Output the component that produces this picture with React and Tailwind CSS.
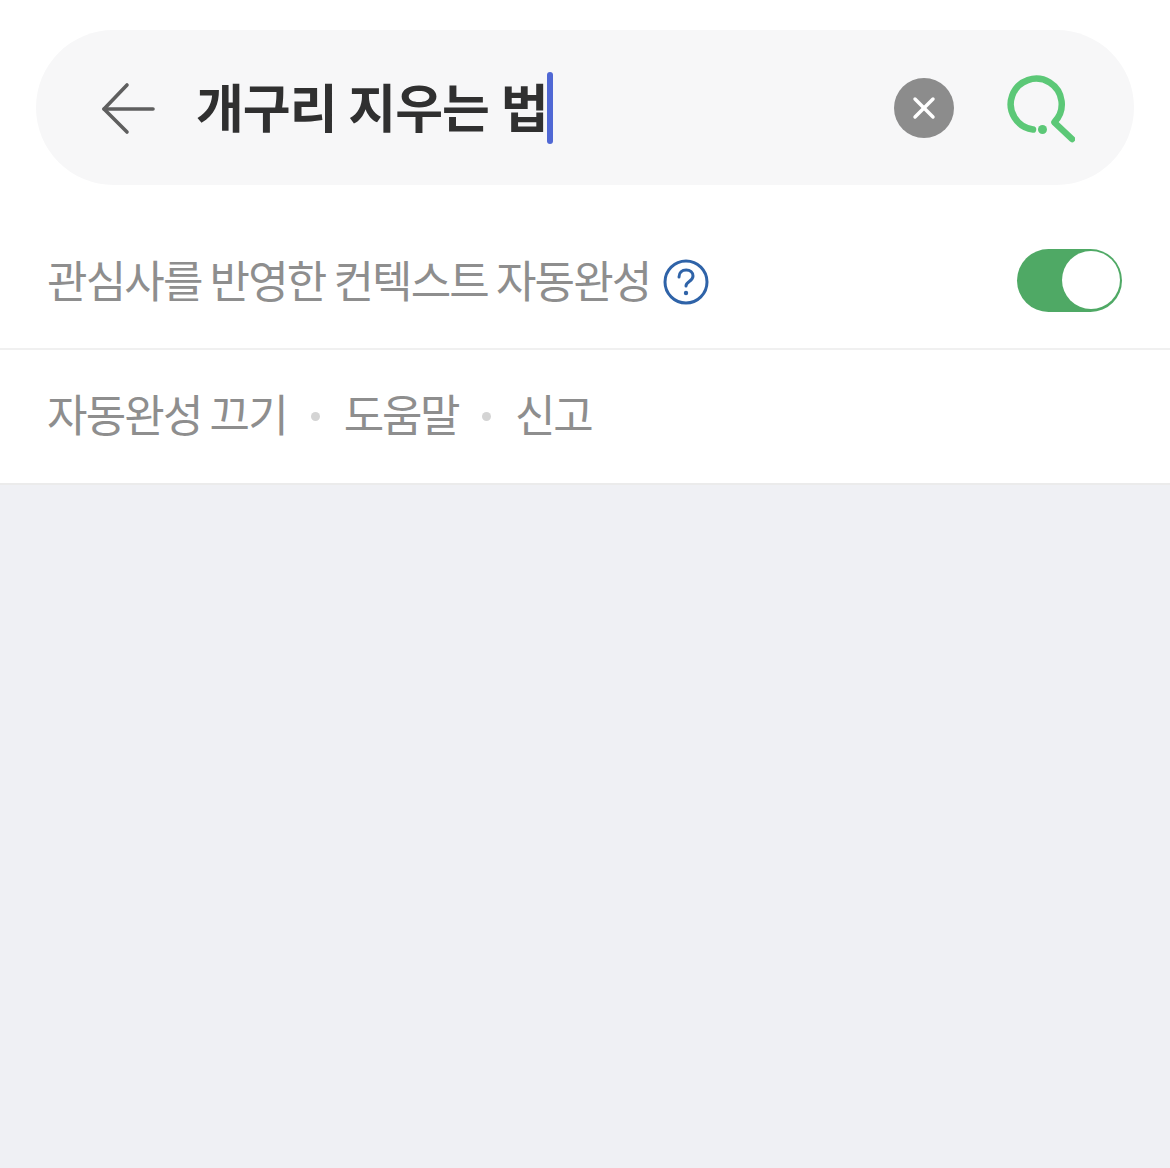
import { X } from 'lucide-react';

const KR = { fontFamily: '"Noto Sans CJK KR", "Noto Sans", sans-serif' };

function BackIcon() {
  return (
    <svg width="56" height="54" viewBox="0 0 56 54" fill="none" stroke="#5f5f5f" strokeWidth="3.6" strokeLinecap="round" strokeLinejoin="round">
      <path d="M52 28H3" />
      <path d="M26 4L3 28l23 23" />
    </svg>
  );
}

function SearchIcon() {
  return (
    <svg width="70" height="70" viewBox="0 0 70 70" fill="none" stroke="#5cc877" strokeWidth="6.5" strokeLinecap="round">
      <path d="M28 56.5A25.5 25.5 0 1 1 49.5 49" />
      <path d="M50 50L67 66" />
      <circle cx="37.5" cy="56.5" r="4.5" fill="#5cc877" stroke="none" />
    </svg>
  );
}

function HelpIcon() {
  return (
    <svg width="46" height="46" viewBox="0 0 46 46" fill="none" stroke="#2f63a8" strokeWidth="3" strokeLinecap="round">
      <circle cx="23" cy="23" r="21" />
      <path d="M16 18c0-4.4 3-7 7.2-7 4 0 6.8 2.5 6.8 6 0 5.5-7 5.5-7 10" />
      <circle cx="23" cy="34" r="2.2" fill="#2f63a8" stroke="none" />
    </svg>
  );
}

function Dot() {
  return <span className="w-[9px] h-[9px] rounded-full bg-[#d4d4d4] mt-1" />;
}

function App() {
  return (
    <div className="min-h-[1168px] bg-[#eff0f4] flex flex-col" style={KR}>
      {/* Search box */}
      <div className="bg-white pt-[30px] px-9">
        <div className="h-[155px] rounded-[78px] bg-[#f7f7f8] flex items-center pl-[65px] pr-[59px]">
          <BackIcon />
          <div className="ml-[39px] flex items-center">
            <span className="text-[52px] leading-none font-bold tracking-[-1px] [word-spacing:1px] text-[#303030] whitespace-nowrap -mt-[3px]">
              개구리 지우는 법
            </span>
            <span className="w-[6px] h-[72px] rounded-full bg-[#5068d4] -ml-[1px]" />
          </div>
          <button className="ml-auto w-[60px] h-[60px] rounded-full bg-[#8c8c8c] flex items-center justify-center">
            <X size={36} color="white" strokeWidth={2.3} />
          </button>
          <div className="ml-[51px]">
            <SearchIcon />
          </div>
        </div>
      </div>

      {/* Context autocomplete row */}
      <div className="h-[165px] bg-white border-b-[2px] border-[#f0f0f0] flex items-center pl-[47px] pr-12 pt-[27px]">
        <span className="text-[44px] leading-none tracking-[-1.85px] text-[#8e8e8e] whitespace-nowrap -mt-[2px]">
          관심사를 반영한 컨텍스트 자동완성
        </span>
        <span className="ml-[13px] mt-1 flex">
          <HelpIcon />
        </span>
        <div className="ml-auto w-[105px] h-[63px] rounded-full bg-[#4fa965] flex items-center justify-end pr-[2px]">
          <span className="w-[58px] h-[58px] rounded-full bg-white" />
        </div>
      </div>

      {/* Links row */}
      <div className="h-[135px] bg-white border-b-[2px] border-[#ebebeb] flex items-center pl-[47px] pb-[5px] gap-[24px]">
        <span className="text-[44px] leading-none tracking-[-1.85px] text-[#8e8e8e] whitespace-nowrap -mt-[2px]">자동완성 끄기</span>
        <Dot />
        <span className="text-[44px] leading-none tracking-[-2.4px] text-[#8e8e8e] whitespace-nowrap -mt-[2px]">도움말</span>
        <Dot />
        <span className="text-[44px] leading-none tracking-[-2.4px] text-[#8e8e8e] whitespace-nowrap -mt-[2px]">신고</span>
      </div>
    </div>
  );
}

export default App;
